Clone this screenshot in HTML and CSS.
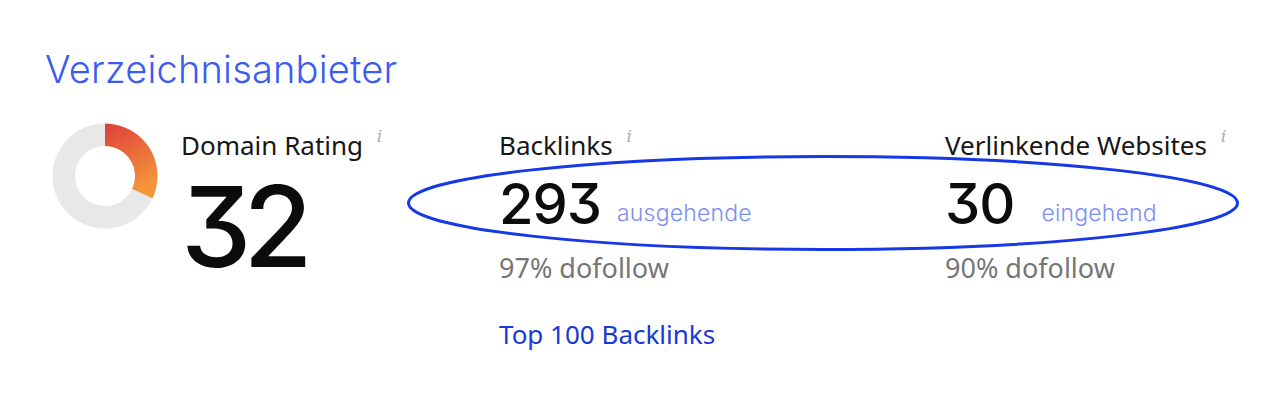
FILE: index.html
```html
<!DOCTYPE html>
<html lang="de">
<head>
<meta charset="utf-8">
<link rel="stylesheet" href="styles.css">
</head>
<body>
<div class="page">
  <h1 class="title">Verzeichnisanbieter</h1>
  <div class="stats">
    <div class="dr">
      <svg class="donut" width="106" height="106" viewBox="0 0 106 106">
        <defs>
          <linearGradient id="g" x1="0" y1="0" x2="0.4" y2="1">
            <stop offset="0" stop-color="#dd3f3a"/>
            <stop offset="1" stop-color="#f4953a"/>
          </linearGradient>
        </defs>
        <circle cx="53" cy="53" r="41.25" fill="none" stroke="#e8e8e8" stroke-width="22.5"/>
        <path d="M53 0.5 A52.5 52.5 0 0 1 100.5 75.35 L80.14 65.77 A30 30 0 0 0 53 23 Z" fill="url(#g)"/>
      </svg>
      <div class="dr-text">
        <div class="label">Domain Rating <span class="info">i</span></div>
        <div class="big">32</div>
      </div>
    </div>
    <div class="col">
      <div class="label">Backlinks <span class="info">i</span></div>
      <div class="numrow"><span class="num">293</span><span class="sub">ausgehende</span></div>
      <div class="follow">97% dofollow</div>
      <a class="link" href="#">Top 100 Backlinks</a>
    </div>
    <div class="col">
      <div class="label">Verlinkende Websites <span class="info">i</span></div>
      <div class="numrow"><span class="num">30</span><span class="sub sub2">eingehend</span></div>
      <div class="follow">90% dofollow</div>
    </div>
  </div>
  <svg class="ring" width="834" height="98" viewBox="0 0 834 98">
    <ellipse cx="417" cy="49" rx="414.5" ry="46.5" fill="none" stroke="#1638e6" stroke-width="3"/>
  </svg>
</div>
</body>
</html>
```

FILE: styles.css
```css
html, body {
  margin: 0;
  padding: 0;
  background: #fff;
}
.page {
  position: relative;
  width: 1280px;
  height: 404px;
  padding: 46px 0 0 45px;
  box-sizing: border-box;
  font-family: "Noto Sans", "Inter", sans-serif;
  color: #111;
}
.title {
  margin: 0;
  font-family: "Inter", sans-serif;
  font-weight: 300;
  font-size: 38px;
  line-height: 46px;
  letter-spacing: 0.2px;
  color: #3a5cf3;
}
.stats {
  display: grid;
  grid-template-columns: 454px 446px auto;
  margin-top: 31px;
}
.dr {
  display: flex;
  align-items: flex-start;
}
.donut {
  margin-left: 7px;
  flex: none;
}
.dr-text {
  margin-left: 23px;
}
.label {
  padding-top: 5px;
  font-size: 26px;
  line-height: 34px;
  color: #161616;
  white-space: nowrap;
}
.info {
  position: relative;
  top: -13px;
  margin-left: 7px;
  font-family: "DejaVu Serif", serif;
  font-style: italic;
  font-size: 17px;
  line-height: 1;
  color: #aaa;
}
.big {
  margin-top: 9px;
  margin-left: 0;
  font-family: "Inter", sans-serif;
  font-feature-settings: "cv09";
  font-weight: 500;
  font-size: 112px;
  line-height: 110px;
  letter-spacing: -8px;
  color: #0c0c0c;
}
.numrow {
  display: flex;
  align-items: baseline;
  height: 72px;
  margin-top: 6px;
}
.num {
  font-family: "Inter", sans-serif;
  font-feature-settings: "cv09";
  font-weight: 500;
  font-size: 56px;
  line-height: 72px;
  letter-spacing: -1px;
  color: #0c0c0c;
}
.sub {
  position: relative;
  top: -3px;
  margin-left: 16px;
  font-family: "Inter", sans-serif;
  font-weight: 300;
  font-size: 23px;
  letter-spacing: 0.2px;
  color: #7d90f2;
}
.sub2 {
  margin-left: 27px;
}
.follow {
  margin-top: 11px;
  font-size: 27px;
  line-height: 34px;
  color: #767676;
}
.link {
  display: block;
  margin-top: 32px;
  font-size: 26px;
  line-height: 34px;
  color: #1639d8;
  text-decoration: none;
}
.ring {
  position: absolute;
  left: 406px;
  top: 154px;
}
```
